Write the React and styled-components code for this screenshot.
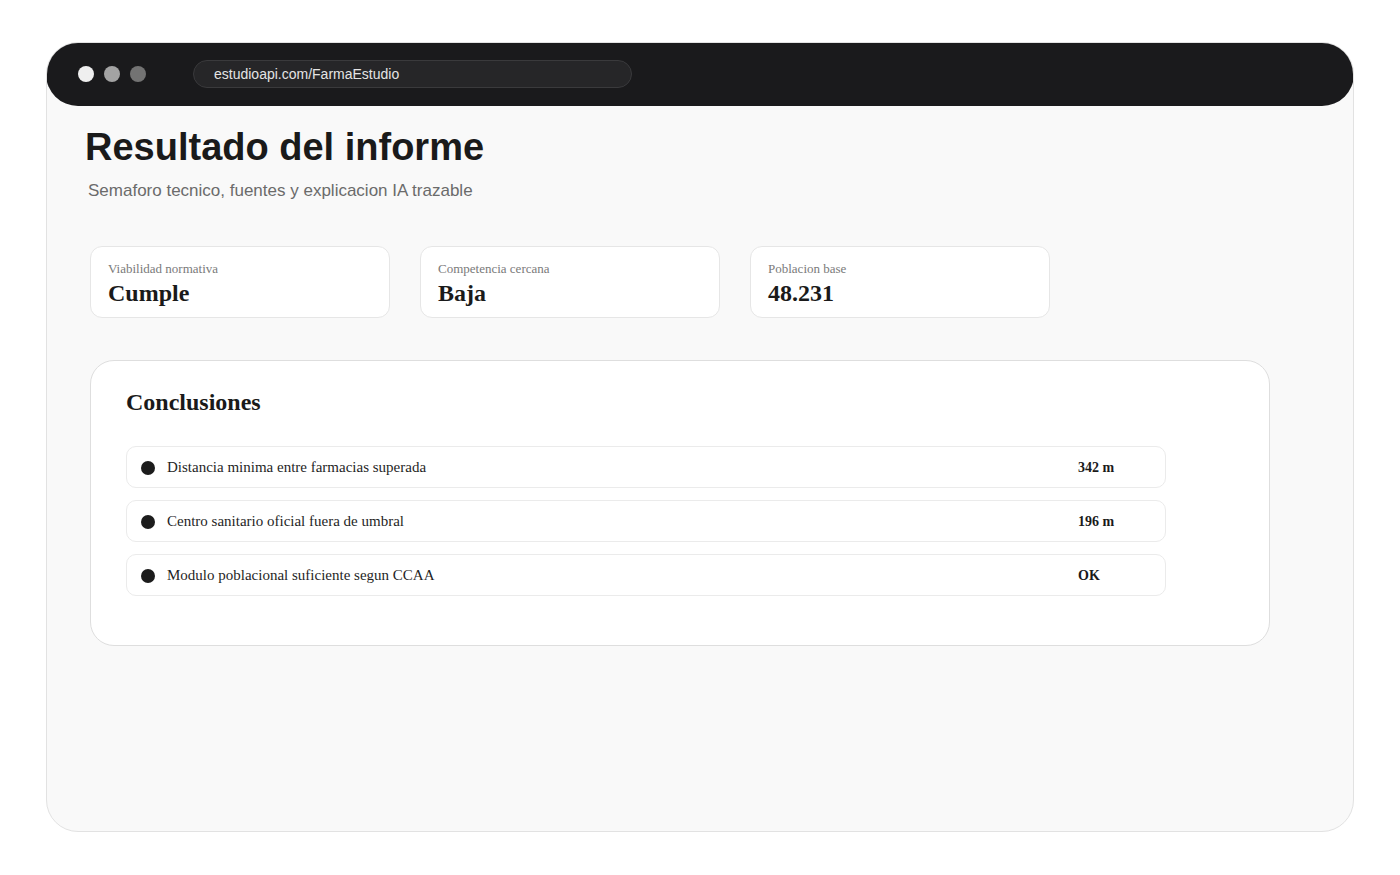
import React from "react";
import styled, { createGlobalStyle } from "styled-components";

const Global = createGlobalStyle`
  html, body { margin: 0; padding: 0; background: #ffffff; }
  * { box-sizing: border-box; }
`;

const Page = styled.div`
  padding: 42px 46px;
  background: #ffffff;
`;

const Frame = styled.div`
  height: 790px;
  background: #f9f9f9;
  border: 1px solid #e2e2e2;
  border-radius: 32px;
  overflow: hidden;
  display: flex;
  flex-direction: column;
`;

const TopBar = styled.div`
  height: 64px;
  flex: none;
  background: #1a1a1c;
  border-radius: 32px;
  margin: -1px -1px 0;
  display: flex;
  align-items: center;
  padding: 0 0 0 32px;
`;

const Dots = styled.div`
  display: flex;
  gap: 10px;
  margin-right: 47px;
`;

const Dot = styled.span`
  width: 16px;
  height: 16px;
  border-radius: 50%;
  background: ${(p) => p.$c};
`;

const Url = styled.div`
  width: 439px;
  height: 28px;
  border-radius: 14px;
  background: #262628;
  border: 1px solid #3a3a3c;
  padding-left: 20px;
  display: flex;
  align-items: center;
  font-family: "Liberation Sans", Arial, sans-serif;
  font-size: 14px;
  color: #e4e4e4;
`;

const Content = styled.div`
  padding: 20px 0 0 38px;
  display: flex;
  flex-direction: column;
`;

const Title = styled.h1`
  margin: 0;
  font-family: "Liberation Sans", Arial, sans-serif;
  font-weight: 700;
  font-size: 38px;
  color: #1a1a1a;
`;

const Subtitle = styled.p`
  margin: 12px 0 0 3px;
  font-family: "Liberation Sans", Arial, sans-serif;
  font-size: 17px;
  color: #6b6b6b;
`;

const Cards = styled.div`
  display: flex;
  gap: 30px;
  margin: 45px 0 0 5px;
`;

const Card = styled.div`
  width: 300px;
  height: 72px;
  background: #ffffff;
  border: 1px solid #e6e6e6;
  border-radius: 12px;
  padding: 14px 17px 0;
  display: flex;
  flex-direction: column;
  gap: 3px;
  font-family: "Liberation Serif", "Times New Roman", serif;
`;

const Label = styled.span`
  font-size: 13px;
  color: #7a7a7a;
`;

const Value = styled.span`
  font-size: 24px;
  font-weight: 700;
  color: #1a1a1a;
`;

const Panel = styled.section`
  width: 1180px;
  margin: 42px 0 0 5px;
  background: #ffffff;
  border: 1px solid #dedede;
  border-radius: 24px;
  padding: 28px 35px 49px;
  font-family: "Liberation Serif", "Times New Roman", serif;
`;

const PanelTitle = styled.h2`
  margin: 0 0 30px;
  font-size: 24px;
  font-weight: 700;
  color: #1a1a1a;
`;

const List = styled.div`
  display: flex;
  flex-direction: column;
  gap: 12px;
  width: 1040px;
`;

const Row = styled.div`
  height: 42px;
  border: 1px solid #ebebeb;
  border-radius: 10px;
  background: #ffffff;
  display: grid;
  grid-template-columns: 14px 1fr 72px;
  column-gap: 12px;
  align-items: center;
  padding: 1px 15px 0 14px;
`;

const Bullet = styled.span`
  width: 14px;
  height: 14px;
  border-radius: 50%;
  background: #1c1c1c;
`;

const RowText = styled.span`
  font-size: 15px;
  color: #1f1f1f;
`;

const RowValue = styled.span`
  font-size: 14px;
  font-weight: 700;
  color: #1a1a1a;
`;

const cards = [
  { label: "Viabilidad normativa", value: "Cumple" },
  { label: "Competencia cercana", value: "Baja" },
  { label: "Poblacion base", value: "48.231" },
];

const rows = [
  { text: "Distancia minima entre farmacias superada", value: "342 m" },
  { text: "Centro sanitario oficial fuera de umbral", value: "196 m" },
  { text: "Modulo poblacional suficiente segun CCAA", value: "OK" },
];

export default function App() {
  return (
    <Page>
      <Global />
      <Frame>
        <TopBar>
          <Dots>
            <Dot $c="#efefef" />
            <Dot $c="#a3a3a3" />
            <Dot $c="#737373" />
          </Dots>
          <Url>estudioapi.com/FarmaEstudio</Url>
        </TopBar>
        <Content>
          <Title>Resultado del informe</Title>
          <Subtitle>Semaforo tecnico, fuentes y explicacion IA trazable</Subtitle>
          <Cards>
            {cards.map((c) => (
              <Card key={c.label}>
                <Label>{c.label}</Label>
                <Value>{c.value}</Value>
              </Card>
            ))}
          </Cards>
          <Panel>
            <PanelTitle>Conclusiones</PanelTitle>
            <List>
              {rows.map((r) => (
                <Row key={r.text}>
                  <Bullet />
                  <RowText>{r.text}</RowText>
                  <RowValue>{r.value}</RowValue>
                </Row>
              ))}
            </List>
          </Panel>
        </Content>
      </Frame>
    </Page>
  );
}
